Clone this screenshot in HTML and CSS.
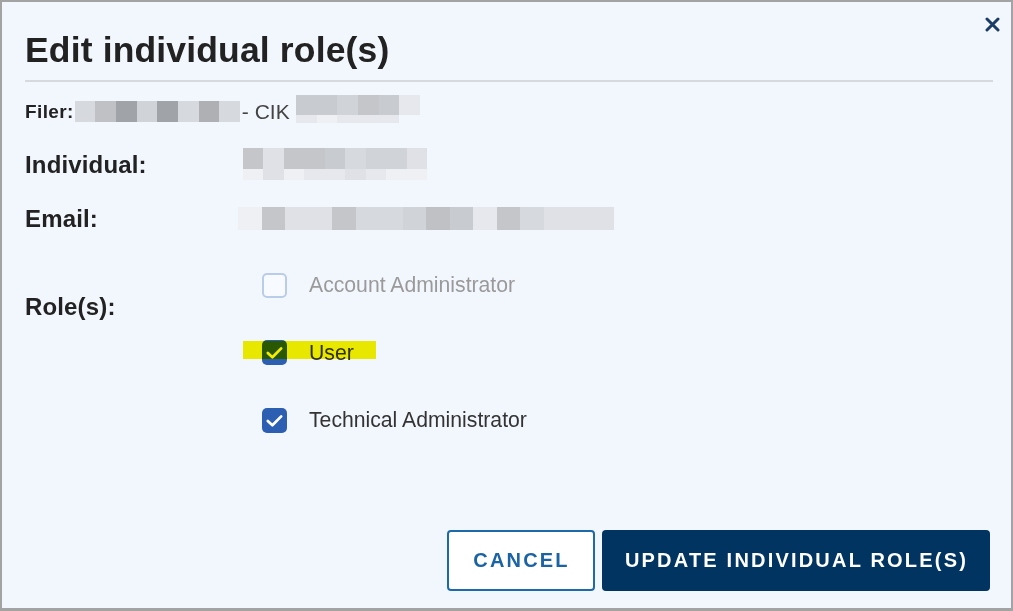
FILE: index.html
```html
<!DOCTYPE html>
<html lang="en">
<head>
<meta charset="utf-8">
<title>Edit individual role(s)</title>
<link rel="stylesheet" href="styles.css">
</head>
<body>
<div class="frame">
  <button class="close" aria-label="Close">
    <svg viewBox="0 0 15 15" width="15" height="15"><path d="M2 2 L13 13 M13 2 L2 13" stroke="currentColor" stroke-width="3" stroke-linecap="round" fill="none"/></svg>
  </button>
  <h1 class="title">Edit individual role(s)</h1>
  <div class="rule"></div>

  <div class="filer-row">
    <span class="filer-label">Filer:</span>
    <div class="mosaic m-filer">
      <i class="s7"></i><i class="s3"></i><i class="s1"></i><i class="s6"></i><i class="s1"></i><i class="s7"></i><i class="s2"></i><i class="s7"></i>
    </div>
    <span class="cik-text">- CIK</span>
    <div class="mosaic m-cik">
      <i class="s5"></i><i class="s5"></i><i class="s6"></i><i class="s4"></i><i class="s5"></i><i class="s9"></i>
      <i class="s9"></i><i class="s10"></i><i class="s9"></i><i class="s9"></i><i class="s9"></i><i class="s0"></i>
    </div>
  </div>

  <div class="field field-individual">
    <span class="label">Individual:</span>
    <div class="mosaic m-indiv">
      <i class="s4"></i><i class="s8"></i><i class="s4"></i><i class="s4"></i><i class="s5"></i><i class="s7"></i><i class="s6"></i><i class="s6"></i><i class="s8"></i>
      <i class="s10"></i><i class="s8"></i><i class="s10"></i><i class="s9"></i><i class="s9"></i><i class="s8"></i><i class="s9"></i><i class="s10"></i><i class="s10"></i>
    </div>
  </div>

  <div class="field field-email">
    <span class="label">Email:</span>
    <div class="mosaic m-email">
      <i class="s10"></i><i class="s4"></i><i class="s8"></i><i class="s8"></i><i class="s4"></i><i class="s7"></i><i class="s7"></i><i class="s6"></i><i class="s3"></i><i class="s5"></i><i class="s9"></i><i class="s4"></i><i class="s7"></i><i class="s8"></i><i class="s8"></i><i class="s8"></i>
    </div>
  </div>

  <div class="field field-roles">
    <span class="label label-roles">Role(s):</span>
    <div class="options">
      <label class="option disabled">
        <span class="box"></span>
        <span class="opt-text">Account Administrator</span>
      </label>
      <label class="option highlighted">
        <span class="box checked">
          <svg viewBox="0 0 25 25" width="25" height="25"><path d="M5.8 13 L10.4 17.3 L19.2 8.4" stroke="#fff" stroke-width="2.7" fill="none" stroke-linecap="round" stroke-linejoin="round"/></svg>
        </span>
        <span class="opt-text">User</span>
        <span class="marker"></span>
      </label>
      <label class="option">
        <span class="box checked">
          <svg viewBox="0 0 25 25" width="25" height="25"><path d="M5.8 13 L10.4 17.3 L19.2 8.4" stroke="#fff" stroke-width="2.7" fill="none" stroke-linecap="round" stroke-linejoin="round"/></svg>
        </span>
        <span class="opt-text">Technical Administrator</span>
      </label>
    </div>
  </div>

  <div class="footer">
    <button class="btn btn-cancel">CANCEL</button>
    <button class="btn btn-primary">UPDATE INDIVIDUAL ROLE(S)</button>
  </div>
</div>
</body>
</html>
```

FILE: styles.css
```css
* { box-sizing: border-box; }

html, body {
  margin: 0;
  padding: 0;
  background: #a3a3a3;
}

body {
  font-family: "Liberation Sans", Arial, sans-serif;
  color: #222;
}

.frame {
  position: relative;
  width: 1013px;
  height: 611px;
  border: 2px solid #a3a3a3;
  border-bottom-width: 3px;
  background: #f2f7fe;
  padding: 0 18px 17px 23px;
  display: flex;
  flex-direction: column;
}

.close {
  position: absolute;
  top: 15px;
  right: 11px;
  width: 15px;
  height: 15px;
  padding: 0;
  border: none;
  background: none;
  color: #1b3c66;
  display: flex;
}

.title {
  margin: 0;
  padding-top: 29px;
  font-size: 35.5px;
  line-height: 39px;
  font-weight: bold;
  letter-spacing: 0.15px;
  color: #222;
}

.rule {
  margin-top: 10px;
  height: 2px;
  background: #d6dade;
}

/* Filer row */
.filer-row {
  margin-top: 13px;
  display: flex;
  align-items: flex-start;
  height: 28px;
}

.filer-label {
  margin-top: 6px;
  font-size: 19px;
  line-height: 21px;
  font-weight: bold;
  letter-spacing: 0.4px;
  color: #222;
}

.cik-text {
  margin: 6px 4px 0 2px;
  font-size: 21px;
  line-height: 21px;
  color: #444;
  width: 50px;
}

/* pixelated (redacted) values */
.mosaic {
  display: grid;
  flex: none;
}
.mosaic i { display: block; }

.m-filer {
  margin-top: 6px;
  margin-left: 1px;
  width: 165px;
  grid-template-columns: repeat(8, 1fr);
  grid-template-rows: 21px;
}
.m-cik {
  width: 124px;
  grid-template-columns: repeat(6, 1fr);
  grid-template-rows: 20px 8px;
}
.m-indiv {
  width: 184px;
  grid-template-columns: repeat(9, 1fr);
  grid-template-rows: 21px 11px;
}
.m-email {
  margin-left: -5px;
  width: 376px;
  grid-template-columns: repeat(16, 1fr);
  grid-template-rows: 23px;
}

.s0 { background: transparent; }
.s1 { background: #a0a3a8; }
.s2 { background: #aeb0b4; }
.s3 { background: #bfc1c5; }
.s4 { background: #c4c6ca; }
.s5 { background: #c8cbd0; }
.s6 { background: #d0d3d8; }
.s7 { background: #d6d9de; }
.s8 { background: #dfe1e6; }
.s9 { background: #e6e8ed; }
.s10 { background: #eef0f4; }

/* fields */
.field {
  display: grid;
  grid-template-columns: 218px 1fr;
  align-items: center;
}

.label {
  font-size: 24px;
  line-height: 23px;
  font-weight: bold;
  letter-spacing: 0.15px;
  color: #222;
}

.field-individual { margin-top: 25px; }
.field-email { margin-top: 27px; }
.field-roles {
  margin-top: 42px;
  align-items: start;
}
.label-roles { margin-top: 23px; }

.options {
  display: flex;
  flex-direction: column;
  gap: 41.5px;
  padding-left: 19px;
}

.option {
  position: relative;
  display: flex;
  align-items: center;
  height: 26px;
}

.box {
  width: 25px;
  height: 25px;
  border-radius: 5px;
  border: 2px solid #b9cde9;
  background: #f7faff;
  flex: none;
  display: flex;
  align-items: center;
  justify-content: center;
}

.box.checked {
  border: none;
  background: #2c5eb2;
}

.opt-text {
  margin-left: 22px;
  font-size: 21.2px;
  line-height: 24px;
  color: #333;
}

.disabled .opt-text { color: #9a9a9a; }

.marker {
  position: absolute;
  left: -19px;
  top: 1px;
  width: 133px;
  height: 18px;
  background: #f4ef00;
  mix-blend-mode: multiply;
}

/* footer */
.footer {
  margin-top: auto;
  margin-right: 3px;
  display: flex;
  justify-content: flex-end;
  gap: 7px;
}

.btn {
  height: 61px;
  border-radius: 4px;
  font-family: "Liberation Sans", Arial, sans-serif;
  font-size: 20px;
  font-weight: bold;
  letter-spacing: 2.2px;
  padding: 0;
  padding-left: 1px;
}

.btn-cancel {
  width: 148px;
  background: #ffffff;
  border: 2px solid #1e69a9;
  color: #1b64a4;
}

.btn-primary {
  width: 388px;
  background: #013461;
  border: none;
  color: #ffffff;
}
```
